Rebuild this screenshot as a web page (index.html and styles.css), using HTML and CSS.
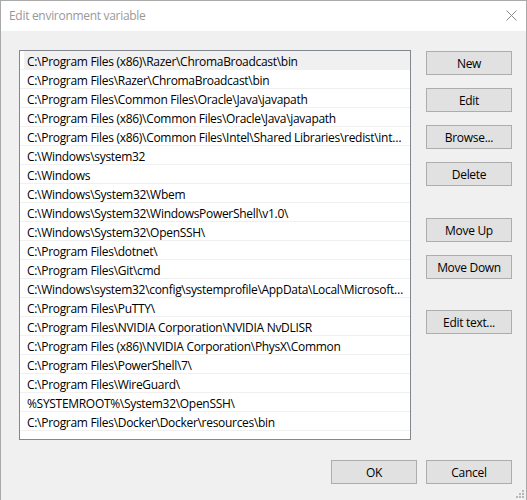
FILE: index.html
```html
<!DOCTYPE html>
<html lang="en">
<head>
<meta charset="UTF-8" />
<meta name="viewport" content="width=device-width, initial-scale=1" />
<title>Edit environment variable</title>
<link rel="stylesheet" href="styles.css">
</head>
<body>

  <div class="window">
    <div class="titlebar">
      <span class="title">Edit environment variable</span>
      <span class="close">
        <svg width="11" height="11" viewBox="0 0 11 11">
          <path d="M0.5 0.5 L10.5 10.5 M10.5 0.5 L0.5 10.5" stroke="#8a8a8a" stroke-width="1" fill="none" />
        </svg>
      </span>
    </div>

    <div class="dialog">
      <div class="main">
        <ul class="path-list">
          <li class="row selected">C:\Program Files (x86)\Razer\ChromaBroadcast\bin</li>
          <li class="row">C:\Program Files\Razer\ChromaBroadcast\bin</li>
          <li class="row">C:\Program Files\Common Files\Oracle\Java\javapath</li>
          <li class="row">C:\Program Files (x86)\Common Files\Oracle\Java\javapath</li>
          <li class="row">C:\Program Files (x86)\Common Files\Intel\Shared Libraries\redist\intel64\compiler</li>
          <li class="row">C:\Windows\system32</li>
          <li class="row">C:\Windows</li>
          <li class="row">C:\Windows\System32\Wbem</li>
          <li class="row">C:\Windows\System32\WindowsPowerShell\v1.0\</li>
          <li class="row">C:\Windows\System32\OpenSSH\</li>
          <li class="row">C:\Program Files\dotnet\</li>
          <li class="row">C:\Program Files\Git\cmd</li>
          <li class="row">C:\Windows\system32\config\systemprofile\AppData\Local\Microsoft\WindowsApps</li>
          <li class="row">C:\Program Files\PuTTY\</li>
          <li class="row">C:\Program Files\NVIDIA Corporation\NVIDIA NvDLISR</li>
          <li class="row">C:\Program Files (x86)\NVIDIA Corporation\PhysX\Common</li>
          <li class="row">C:\Program Files\PowerShell\7\</li>
          <li class="row">C:\Program Files\WireGuard\</li>
          <li class="row">%SYSTEMROOT%\System32\OpenSSH\</li>
          <li class="row">C:\Program Files\Docker\Docker\resources\bin</li>
        </ul>

        <div class="side-buttons">
          <button class="btn">New</button>
          <button class="btn">Edit</button>
          <button class="btn">Browse...</button>
          <button class="btn">Delete</button>
          <button class="btn group-start">Move Up</button>
          <button class="btn">Move Down</button>
          <button class="btn group-start">Edit text...</button>
        </div>
      </div>

      <div class="footer">
        <button class="btn">OK</button>
        <button class="btn">Cancel</button>
      </div>
    </div>

    <svg class="grip" width="8" height="8" viewBox="0 0 8 8">
      <rect x="6" y="0" width="2" height="2" fill="#b8b8b8" />
      <rect x="3" y="3" width="2" height="2" fill="#b8b8b8" />
      <rect x="6" y="3" width="2" height="2" fill="#b8b8b8" />
      <rect x="0" y="6" width="2" height="2" fill="#b8b8b8" />
      <rect x="3" y="6" width="2" height="2" fill="#b8b8b8" />
      <rect x="6" y="6" width="2" height="2" fill="#b8b8b8" />
    </svg>
  </div>

</body>
</html>
```

FILE: styles.css
```css
html, body {
  margin: 0;
  padding: 0;
  height: 100%;
}
body {
  font-family: "Open Sans", "Noto Sans", sans-serif;
  font-size: 12px;
  letter-spacing: -0.3px;
  color: #000;
  background: #f0f0f0;
}
.window {
  position: relative;
  box-sizing: border-box;
  height: 500px;
  border: 1px solid #a9a9a9;
  border-bottom: none;
  background: #f0f0f0;
}
.titlebar {
  height: 30px;
  background: #fff;
  display: flex;
  align-items: center;
  justify-content: space-between;
  padding: 0 9px 0 8px;
}
.title {
  color: #999;
  margin-top: -1px;
}
.close {
  display: flex;
  margin-top: -1px;
}
.dialog {
  padding: 19px 14px 0 18px;
}
.main {
  display: flex;
  gap: 15px;
}
.path-list {
  box-sizing: border-box;
  width: 392px;
  height: 390px;
  margin: 0;
  padding: 0;
  list-style: none;
  background: #fff;
  border: 1px solid #828790;
}
.row {
  height: 18px;
  line-height: 21px;
  padding: 0 4px 0 7px;
  border-bottom: 1px solid #f0f0f0;
  white-space: nowrap;
  overflow: hidden;
  text-overflow: ellipsis;
}
.row.selected {
  background: linear-gradient(to right, #fff 4px, #f0f0f0 4px);
}
.side-buttons {
  display: flex;
  flex-direction: column;
  gap: 13px;
  padding-top: 1px;
}
.btn {
  box-sizing: border-box;
  width: 86px;
  height: 24px;
  padding: 0;
  font: inherit;
  letter-spacing: inherit;
  color: #000;
  background: #e1e1e1;
  border: 1px solid #adadad;
}
.side-buttons .group-start {
  margin-top: 19px;
}
.side-buttons .btn:last-child {
  margin-top: 18px;
}
.footer {
  display: flex;
  justify-content: flex-end;
  gap: 9px;
  margin-top: 20px;
}
.grip {
  position: absolute;
  right: 2px;
  bottom: 2px;
}
```
